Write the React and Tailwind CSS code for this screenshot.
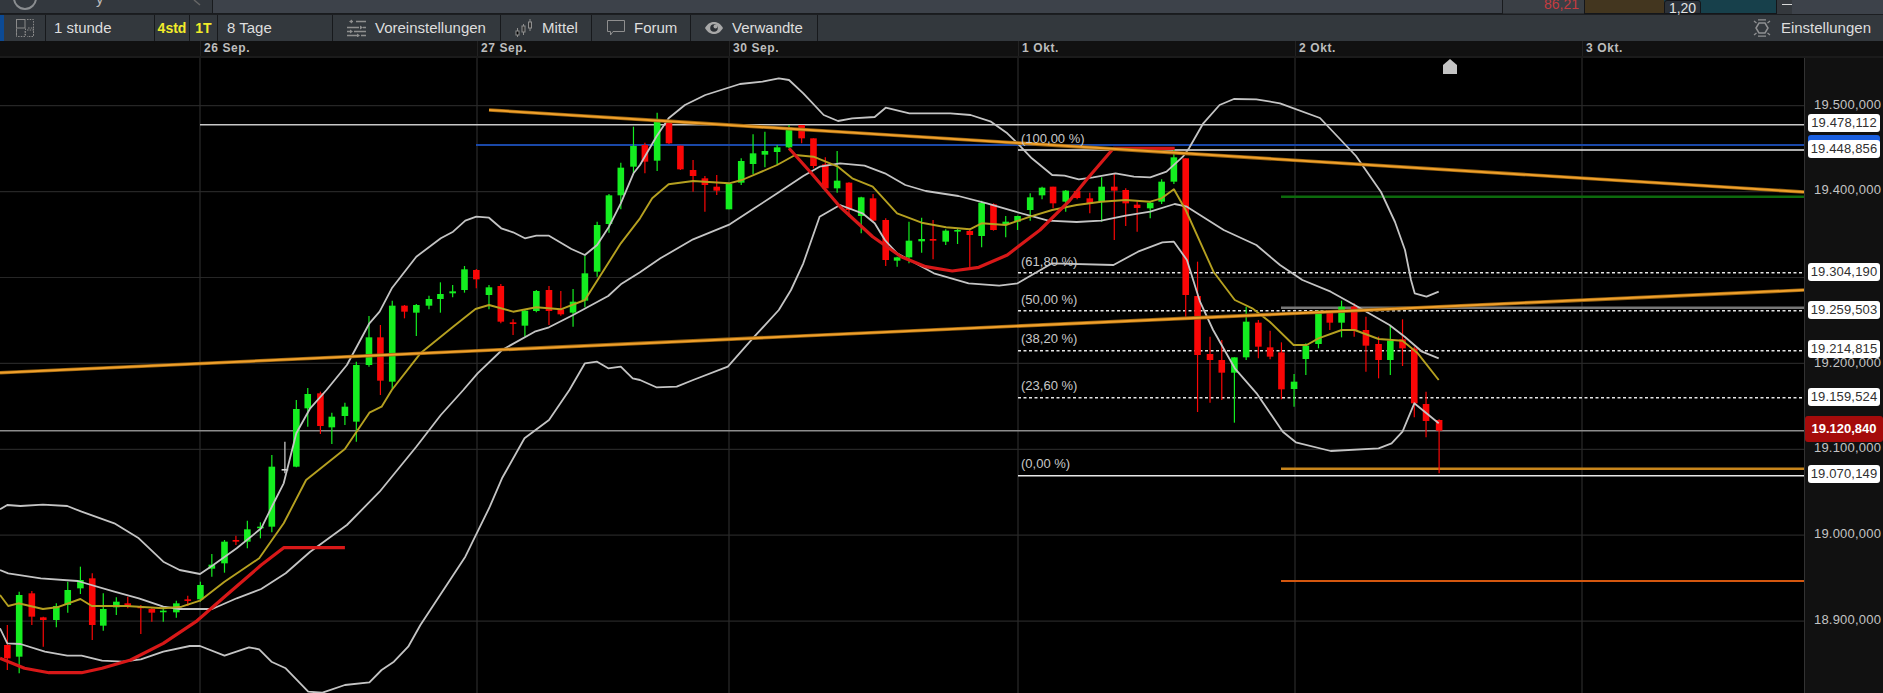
import React from "react";

// Coordinate helpers: chart data was read from crops with these scales
const z3 = ([x, y]) => [x / 2.45, y / 3 + 70];
const z4 = ([x, y]) => [x / 2.45 + 640, y / 3 + 70];
const z5 = ([x, y]) => [x / 2.296 + 1200, y / 3 + 280];
const z6 = ([x, y]) => [x / 2.45, y / 3 + 390];
const id = (p) => p;

const seg = (f, pts) => pts.map(f);
const poly = (pts) => pts.map((p) => `${p[0].toFixed(1)},${p[1].toFixed(1)}`).join(" ");

const upper = [
  ...seg(z6, [[0,358],[18,345],[50,348],[105,344],[165,348],[200,365],[280,400],[340,445],[400,515],[440,540],[490,552],[520,527],[580,475],[640,415],[668,345],[695,280],[726,130],[760,55],[800,0]]),
  ...seg(z3, [[850,885],[905,760],[930,725],[960,655],[1020,560],[1080,505],[1110,485],[1140,452],[1167,440],[1198,443],[1228,475],[1257,487],[1286,505],[1314,497],[1345,497],[1400,537],[1433,555],[1463,525],[1492,470],[1521,400],[1552,310],[1568,285]]),
  ...seg(z4, [[40,200],[70,145],[110,105],[160,75],[245,42],[300,35],[340,25],[365,30],[400,70],[450,135],[485,153],[520,145],[575,141],[602,113],[660,130],[760,130],[810,135],[860,155],[900,190],[925,220],[960,265],[1010,315],[1040,317],[1075,328],[1110,322],[1165,310],[1210,320],[1250,322],[1290,305],[1330,260],[1345,235],[1380,160],[1420,105],[1455,87],[1510,88],[1568,100]]),
  ...seg(id, [[1320,118],[1356,156],[1381,192],[1395,222],[1405,250],[1411,280]]),
  ...seg(z5, [[493,40],[520,50],[548,35]]),
];
const middle = [
  ...seg(z6, [[0,540],[20,550],[100,565],[190,573],[280,605],[340,625],[400,650],[440,657],[520,657],[580,625],[640,597],[700,550],[760,485],[850,405],[930,305],[1020,170],[1080,75],[1135,0]]),
  ...seg(z3, [[1170,910],[1230,840],[1310,785],[1345,772],[1404,735],[1490,678],[1521,643],[1568,607]]),
  ...seg(z4, [[50,565],[130,508],[220,463],[280,415],[340,367],[400,318],[440,290],[490,280],[550,287],[600,310],[650,345],[700,363],[780,378],[850,400],[920,425],[1000,452],[1070,456],[1130,452],[1190,437],[1250,425],[1310,402],[1340,410],[1430,480],[1510,525],[1568,585]]),
  ...seg(z5, [[235,0],[300,35],[355,75],[435,135],[470,170],[510,215],[548,235]]),
];
const lower = [
  ...seg(z6, [[0,715],[18,760],[50,762],[110,785],[165,797],[200,797],[250,812],[300,815],[345,808],[400,785],[465,768],[490,768],[550,797],[610,772],[635,778],[665,815],[700,835],[755,905],[790,908],[845,885],[905,877],[935,840],[965,815],[1000,770],[1030,705],[1140,500],[1200,350],[1230,265],[1285,145],[1345,90],[1395,0]]),
  ...seg(z3, [[1433,880],[1463,875],[1490,895],[1521,890],[1550,925],[1568,930]]),
  ...seg(z4, [[40,952],[90,950],[130,930],[215,890],[280,800],[340,720],[370,660],[400,580],[440,440],[490,405],[545,430],[575,460],[600,510],[630,550],[720,610],[805,640],[880,647],[925,640],[960,615],[1010,580],[1160,585],[1220,545],[1280,517],[1308,515],[1340,570]]),
  ...seg(z5, [[0,65],[30,150],[80,265],[130,340],[190,455],[220,487],[300,513],[410,505],[440,490],[465,455],[492,370],[548,430]]),
];
const ma = [
  ...seg(z6, [[0,615],[20,648],[45,640],[105,657],[140,652],[197,627],[225,648],[310,648],[400,655],[445,650],[490,632],[550,575],[635,505],[695,400],[750,270],[845,177],[905,68],[935,50],[960,0]]),
  ...seg(z3, [[1030,850],[1110,770],[1165,717],[1198,705],[1257,725],[1314,712],[1374,718],[1433,690],[1521,520],[1568,445]]),
  ...seg(z4, [[30,385],[70,343],[130,333],[218,340],[250,330],[336,285],[380,255],[425,260],[485,290],[520,325],[570,350],[630,430],[690,458],[750,472],[808,478],[837,460],[896,465],[956,440],[1010,420],[1070,405],[1130,395],[1190,390],[1250,395],[1278,385],[1308,358],[1337,420],[1405,605]]),
  ...seg(z5, [[80,60],[120,85],[160,125],[215,195],[245,195],[272,175],[325,150],[355,150],[410,177],[465,182],[500,220],[548,300]]),
];
const red1 = seg(z6, [[0,805],[60,835],[120,848],[200,848],[250,835],[320,810],[400,760],[480,695],[560,610],[640,525],[695,473],[845,473]]);
const red2 = seg(z4, [[365,235],[420,310],[490,410],[570,500],[640,560],[700,590],[765,603],[830,592],[900,555],[980,480],[1050,395],[1100,320],[1160,235],[1310,235]]);

const G = "#14ee20";
const R = "#fa0606";
const W = "#d8d8d8";
// [x, high, top, bottom, low, colour]
const raw6 = [
  [18,705,765,805,840,R],[47,605,615,800,850,G],[78,603,610,680,705,R],[106,680,682,690,770,R],[138,640,648,690,712,G],[166,575,600,645,668,G],[197,530,570,595,612,G],[226,550,565,705,750,R],[253,610,657,707,722,G],[285,622,635,652,675,G],[313,620,640,650,655,R],[345,645,650,652,732,R],[372,655,657,668,695,R],[400,650,662,665,695,G],[432,632,640,667,683,G],[460,617,628,630,648,R],[491,575,585,628,635,G],[519,492,524,536,560,G],[550,450,455,520,548,G],[578,437,450,455,465,R],[606,392,418,455,475,G],[638,397,410,412,445,G],[666,195,230,410,427,G],[698,155,237,240,250,W],[726,30,57,230,232,G],[754,-6,12,55,110,G],[785,5,10,108,132,R],[813,68,80,112,162,G],[845,38,50,78,105,G],
];
const raw3 = [
  [873,875,885,1055,1115,G],[904,738,802,885,890,G],[932,765,802,932,975,R],[961,692,707,935,960,G],[991,705,707,725,745,R],[1020,702,705,728,798,G],[1051,677,687,707,718,G],[1079,637,672,687,728,G],[1109,645,664,670,682,G],[1138,588,598,660,668,G],[1167,597,600,628,655,R],[1198,645,652,675,718,G],[1227,642,648,755,760,R],[1257,748,757,762,795,R],[1286,718,722,767,800,G],[1314,660,663,723,727,G],[1345,648,660,723,765,R],[1374,663,718,733,737,R],[1404,657,695,728,770,G],[1433,558,610,692,712,G],[1463,455,465,605,620,G],[1492,372,376,462,488,G],[1521,278,293,376,418,G],[1552,170,228,290,312,G],
];
const raw4 = [
  [12,218,225,275,310,R],[42,128,150,272,303,G],[71,150,150,220,222,R],[99,227,227,298,300,R],[130,270,300,318,365,R],[159,318,325,345,425,R],[188,315,350,362,375,R],[218,340,342,418,418,G],[248,265,273,338,345,G],[277,193,250,282,312,G],[306,185,243,254,292,G],[336,225,232,246,285,G],[365,165,172,232,235,G],[396,165,165,205,220,R],[425,205,205,288,295,R],[454,262,283,355,358,R],[483,243,332,355,368,G],[512,337,338,420,440,R],[542,380,382,438,490,G],[571,372,385,452,455,R],[602,445,450,570,588,R],[630,560,562,572,590,G],[659,455,512,562,580,G],[690,443,507,514,548,G],[718,450,507,512,568,R],[749,478,482,515,525,G],[778,475,480,482,522,G],[808,475,483,495,600,R],[837,392,398,498,532,G],[866,400,403,480,482,R],[896,438,455,462,502,G],[925,437,438,455,480,G],[956,370,382,420,452,G],[985,350,353,376,388,G],[1012,350,350,400,415,R],[1043,360,362,395,425,G],[1071,362,363,384,388,R],[1102,368,385,402,430,R],[1131,322,350,395,455,G],[1162,312,350,362,510,R],[1190,355,360,400,468,R],[1218,392,404,414,485,R],[1250,395,398,415,445,G],[1278,328,335,395,402,G],[1308,240,262,335,342,G],[1337,265,265,675,740,R],[1366,575,678,855,1026,R],
];
const raw5 = [
  [23,170,222,240,368,R],[50,180,240,278,360,R],[79,232,232,278,428,G],[106,80,125,232,240,G],[134,120,128,200,235,R],[161,152,202,230,238,R],[187,187,217,328,358,R],[216,282,305,327,380,G],[243,190,197,237,285,G],[272,90,97,192,205,G],[298,90,90,128,150,R],[325,62,80,128,172,G],[354,70,80,150,170,R],[381,110,150,197,275,R],[410,170,192,240,295,R],[437,135,182,240,285,G],[465,118,178,205,258,R],[492,200,205,370,412,R],[519,335,372,423,472,R],[549,418,420,452,580,R],
];
const conv = (f, list) =>
  list.map(([x, h, t, b, l, c]) => {
    const [rx, hy] = f([x, h]);
    return { x: rx, h: hy, t: f([x, t])[1], b: f([x, b])[1], l: f([x, l])[1], c };
  });
const candles = [...conv(z6, raw6), ...conv(z3, raw3), ...conv(z4, raw4), ...conv(z5, raw5)];

const gridY = [105.7, 191.6, 277.5, 363.4, 449.3, 535.2, 621.1];
const gridX = [200, 477, 729, 1018, 1295, 1582];

function Chart() {
  return (
    <svg viewBox="0 58 1804 635" className="block w-full h-full">
      {gridY.map((y) => (
        <line key={y} x1="0" x2="1804" y1={y} y2={y} stroke="#262626" strokeWidth="1.2" />
      ))}
      {gridX.map((x) => (
        <line key={x} x1={x} x2={x} y1="58" y2="693" stroke="#2a2a2a" strokeWidth="1.2" />
      ))}
      <line x1="200" x2="1804" y1="124.7" y2="124.7" stroke="#c8c8c8" strokeWidth="1.6" />
      <line x1="476" x2="1804" y1="145" y2="145" stroke="#1a48a8" strokeWidth="2" />
      <line x1="1018" x2="1804" y1="150" y2="150" stroke="#e8e8e8" strokeWidth="1.6" />
      <line x1="1281" x2="1804" y1="196.7" y2="196.7" stroke="#0d6a0d" strokeWidth="2.6" />
      <line x1="0" x2="1804" y1="430.7" y2="430.7" stroke="#8c8c8c" strokeWidth="1.6" />
      <line x1="1281" x2="1804" y1="307.7" y2="307.7" stroke="#777" strokeWidth="2.4" />
      {[272.7, 310.7, 350.7, 397.7].map((y) => (
        <line key={y} x1="1018" x2="1804" y1={y} y2={y} stroke="#e6e6e6" strokeWidth="1.6" strokeDasharray="3 2.5" />
      ))}
      <line x1="1018" x2="1804" y1="475.7" y2="475.7" stroke="#e8e8e8" strokeWidth="1.6" />
      <line x1="1281" x2="1804" y1="468.7" y2="468.7" stroke="#c8851c" strokeWidth="2.4" />
      <line x1="1281" x2="1804" y1="581" y2="581" stroke="#d4570f" strokeWidth="2" />

      {candles.map((c, i) => (
        <g key={i}>
          <line x1={c.x} x2={c.x} y1={c.h} y2={c.l} stroke={c.c} strokeWidth="1.2" />
          <rect x={c.x - 3.3} width="6.6" y={c.t} height={Math.max(c.b - c.t, 1.6)} fill={c.c} />
        </g>
      ))}

      <polyline points={poly(upper)} fill="none" stroke="#c4c4c4" strokeWidth="1.8" strokeLinejoin="round" />
      <polyline points={poly(middle)} fill="none" stroke="#c4c4c4" strokeWidth="1.8" strokeLinejoin="round" />
      <polyline points={poly(lower)} fill="none" stroke="#c4c4c4" strokeWidth="1.8" strokeLinejoin="round" />
      <polyline points={poly(ma)} fill="none" stroke="#b5a020" strokeWidth="1.9" strokeLinejoin="round" />
      <polyline points={poly(red1)} fill="none" stroke="#d81818" strokeWidth="3.2" strokeLinejoin="round" />
      <polyline points={poly(red2)} fill="none" stroke="#d81818" strokeWidth="3.2" strokeLinejoin="round" />

      <line x1="489" y1="110" x2="1804" y2="192" stroke="#9a6410" strokeWidth="3.6" />
      <line x1="489" y1="110" x2="1804" y2="192" stroke="#f0a02c" strokeWidth="2" />
      <line x1="0" y1="372.7" x2="1804" y2="290" stroke="#9a6410" strokeWidth="3.6" />
      <line x1="0" y1="372.7" x2="1804" y2="290" stroke="#f0a02c" strokeWidth="2" />

      <polygon points="1450,59 1457,65 1457,74 1443,74 1443,65" fill="#c4c4c4" />
    </svg>
  );
}

const Cell = ({ className = "", children }) => (
  <div className={`flex items-center h-full shrink-0 border-r border-[#17191c] ${className}`}>{children}</div>
);

const LayoutIcon = () => (
  <svg width="20" height="20" viewBox="0 0 20 20" fill="none" stroke="#8a8a8a" strokeWidth="1">
    <rect x="1.5" y="1.5" width="8.5" height="8.5" />
    <path d="M12 1.5h6.5v8.5H12M1.5 12v6.5H10V12M12 12h6.5v6.5H12" strokeDasharray="1.5 1.2" />
    <path d="M1.5 10.5v8M10.5 10.5v8M18.5 10.5v8" strokeDasharray="1.5 1.2" />
  </svg>
);
const SlidersIcon = () => (
  <svg width="19" height="18" viewBox="0 0 19 18" fill="none" stroke="#8f8f8f" strokeWidth="1.6">
    <path d="M4 2.5h2M9 2.5h10M0 8.5h12M16 8.5h3M0 12.5h3M7 12.5h12M0 16.5h10M14 16.5h5" />
    <path d="M5 .5v4L2 2.500zM13 6.500v4l3-2zM3 10.500v4l3-2zM10 14.500v4l3-2z" fill="#8f8f8f" stroke="none" />
  </svg>
);
const CandlesIcon = () => (
  <svg width="18" height="18" viewBox="0 0 18 18" fill="none" stroke="#8f8f8f" strokeWidth="1">
    <path d="M2.500 9v9M8.500 5v11M15 0v12" />
    <rect x="1" y="12" width="3" height="4" fill="#000" />
    <rect x="7" y="7" width="3" height="6" fill="#333" />
    <rect x="13.500" y="3" width="3" height="6" fill="#333" />
  </svg>
);
const BubbleIcon = () => (
  <svg width="18" height="16" viewBox="0 0 18 16" fill="none" stroke="#8f8f8f" strokeWidth="1">
    <path d="M.5.500h17v11H6L3.500 15v-3.500H.5z" />
  </svg>
);
const EyeIcon = () => (
  <svg width="18" height="12" viewBox="0 0 18 12">
    <path d="M0 6C2.500 1.500 6 0 9 0s6.500 1.500 9 6c-2.500 4.500-6 6-9 6S2.500 10.500 0 6z" fill="#a8a8a8" />
    <circle cx="9" cy="6" r="3.800" fill="#2c3035" />
    <circle cx="10.500" cy="4.600" r="2" fill="#a8a8a8" />
  </svg>
);
const GearIcon = () => (
  <svg width="18" height="18" viewBox="0 0 18 18" fill="none" stroke="#8f9092" strokeWidth="1.5">
    <path d="M6 4h6l3 5-3 5H6L3 9z" />
    <path d="M5 .8h8M5 17.200h8M3.500 4 1 2M14.500 4 17 2M3.500 14 1 16M14.500 14 17 16" strokeWidth="1.300" />
  </svg>
);

const Dates = [
  ["26 Sep.", "w-[277px]"],
  ["27 Sep.", "w-[252px]"],
  ["30 Sep.", "w-[289px]"],
  ["1 Okt.", "w-[277px]"],
  ["2 Okt.", "w-[287px]"],
  ["3 Okt.", "flex-1"],
];

const Boxed = ({ top, children }) => (
  <div
    style={{ top: top - 58 }}
    className="absolute left-[3px] w-[72px] h-[18px] -translate-y-1/2 bg-white rounded-[3px] text-[#303030] text-[13px] leading-[18px] text-center tracking-[0.15px]"
  >
    {children}
  </div>
);
const Plain = ({ top, children }) => (
  <div
    style={{ top: top - 58 }}
    className="absolute left-[9px] -translate-y-1/2 text-[#c4c4c4] text-[13px] leading-4 tracking-[0.2px] whitespace-nowrap"
  >
    {children}
  </div>
);
const Fib = ({ top, children }) => (
  <div
    style={{ top: top - 58 }}
    className="absolute left-[1021px] -translate-y-1/2 text-[#c8c8c8] text-[13px] leading-4 whitespace-nowrap"
  >
    {children}
  </div>
);

export default function App() {
  return (
    <div className="w-[1883px] h-[693px] overflow-hidden flex flex-col bg-black font-['Liberation_Sans',Arial,sans-serif]">
      {/* top strip, cut off by the edge of the picture */}
      <div className="flex h-[14px] shrink-0 bg-[#3d424a]">
        <div className="relative w-[213px] shrink-0 overflow-hidden bg-[#33383e] border-b border-r border-[#191b1e]">
          <div className="absolute left-[13px] top-[-14px] w-6 h-6 rounded-full border-2 border-[#8a8d90]" />
          <span className="absolute left-[96px] top-[-10px] text-[15px] leading-[18px] text-[#bbb]">y</span>
          <svg className="absolute left-[192px] top-0" width="10" height="13" viewBox="0 0 10 13" fill="none" stroke="#666" strokeWidth="1.500">
            <path d="M2 0 8 5" />
          </svg>
        </div>
        <div className="flex-1 border-b border-r border-[#191b1e]" />
        <div className="w-[81px] shrink-0 overflow-hidden relative bg-[#3a3f45] border-b border-[#2a2d31]">
          <span className="absolute right-[5px] top-[-4px] text-[14px] leading-4 text-[#c43c40]">86,21</span>
        </div>
        <div className="flex w-[193px] shrink-0 border-l border-b border-r border-[#14161a] relative">
          <div className="w-[79px] bg-[#43361f]" />
          <div className="flex-1 bg-[#17404b]" />
          <div className="absolute left-[79px] top-0 w-[37px] h-[14px] rounded-t-[3px] bg-[#2b3139] border border-[#14161a] text-[14px] leading-[14px] text-center text-[#e2e2e2]">
            1,20
          </div>
        </div>
        <div className="w-[15px] shrink-0 bg-[#34383d] flex items-start pt-[4px] pl-[5px]">
          <div className="w-[10px] h-px bg-[#d8d8d8]" />
        </div>
        <div className="w-[91px] shrink-0" />
      </div>

      {/* toolbar */}
      <div className="flex h-[27px] shrink-0 items-center bg-[#33383d] text-[15px] text-[#dedede] border-t border-[#1c1e21]">
        <div className="w-1 h-full shrink-0 bg-[#0c4a94]" />
        <Cell className="w-[42px] justify-center"><LayoutIcon /></Cell>
        <Cell className="w-[109px] pl-[8px]">1 stunde</Cell>
        <Cell className="w-[35px] justify-center font-bold text-[14px] text-[#f2ec2a]">4std</Cell>
        <Cell className="w-[28px] justify-center font-bold text-[14px] text-[#f2ec2a]">1T</Cell>
        <Cell className="w-[115px] pl-[9px]">8 Tage</Cell>
        <Cell className="w-[168px] pl-[14px] gap-[9px]"><SlidersIcon />Voreinstellungen</Cell>
        <Cell className="w-[91px] pl-[14px] gap-[9px]"><CandlesIcon />Mittel</Cell>
        <Cell className="w-[99px] pl-[15px] gap-[9px]"><BubbleIcon />Forum</Cell>
        <Cell className="w-[127px] pl-[14px] gap-[9px]"><EyeIcon />Verwandte</Cell>
        <div className="flex-1" />
        <div className="flex items-center gap-[10px] pr-[12px]"><GearIcon />Einstellungen</div>
      </div>

      {/* date axis */}
      <div className="flex h-[17px] shrink-0 bg-[#111111] border-b-2 border-[#1b1b1b] text-[12px] font-bold text-[#bdbdbd] leading-[15px]">
        <div className="w-[200px] shrink-0" />
        {Dates.map(([t, w]) => (
          <div key={t} className={`${w} shrink-0 pl-[3px] tracking-[0.6px] border-l border-[#222]`}>{t}</div>
        ))}
      </div>

      {/* chart and price axis */}
      <div className="flex flex-1 min-h-0">
        <div className="relative w-[1804px] shrink-0">
          <Chart />
          <Fib top={139}>(100,00 %)</Fib>
          <Fib top={261.700}>(61,80 %)</Fib>
          <Fib top={300}>(50,00 %)</Fib>
          <Fib top={339.300}>(38,20 %)</Fib>
          <Fib top={386}>(23,60 %)</Fib>
          <Fib top={463.600}>(0,00 %)</Fib>
        </div>
        <div className="relative flex-1 bg-[#111111] border-l border-[#333]">
          <Plain top={105}>19.500,000</Plain>
          <Boxed top={123}>19.478,112</Boxed>
          <div style={{ top: 135 - 58 }} className="absolute left-[3px] w-[72px] h-[10px] rounded-t-[3px] bg-[#1a5fe0]" />
          <Boxed top={149}>19.448,856</Boxed>
          <Plain top={190}>19.400,000</Plain>
          <Boxed top={272}>19.304,190</Boxed>
          <Boxed top={310}>19.259,503</Boxed>
          <Boxed top={349}>19.214,815</Boxed>
          <Plain top={363}>19.200,000</Plain>
          <Boxed top={397}>19.159,524</Boxed>
          <Plain top={448}>19.100,000</Plain>
          <Boxed top={474}>19.070,149</Boxed>
          <Plain top={534}>19.000,000</Plain>
          <Plain top={620}>18.900,000</Plain>
          <div
            style={{ top: 416 - 58 }}
            className="absolute left-0 w-[78px] h-[26px] rounded-[3px] bg-[#a50b0b] text-white font-bold text-[13px] leading-[26px] text-center"
          >
            19.120,840
          </div>
        </div>
      </div>
    </div>
  );
}
